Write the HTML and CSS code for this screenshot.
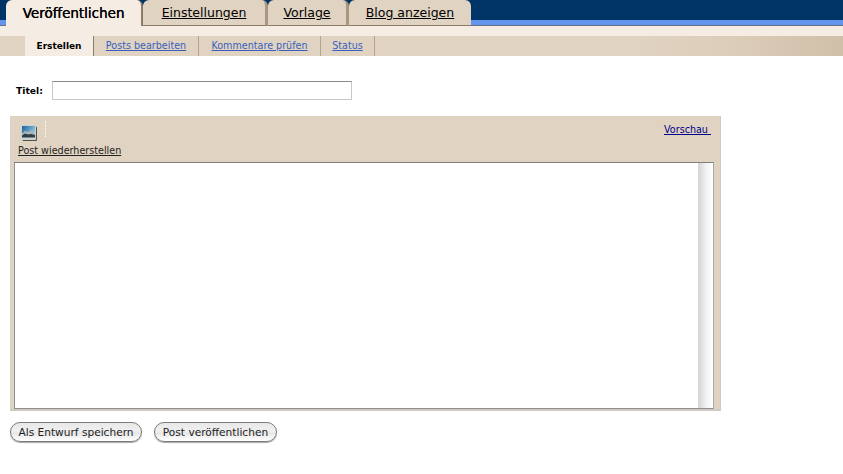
FILE: index.html
```html
<!DOCTYPE html>
<html lang="de">
<head>
<meta charset="utf-8">
<title>Erstellen</title>
<link rel="stylesheet" href="styles.css">
</head>
<body>
<nav class="tabs">
  <a class="tab tab-active" href="#">Veröffentlichen</a>
  <a class="tab tab-settings" href="#">Einstellungen</a>
  <a class="tab tab-template" href="#">Vorlage</a>
  <a class="tab tab-last" href="#">Blog anzeigen</a>
</nav>
<div class="spacer-band"></div>
<nav class="subtabs">
  <a class="subtab subtab-active" href="#">Erstellen</a>
  <a class="subtab sub-posts" href="#">Posts bearbeiten</a>
  <a class="subtab sub-comments" href="#">Kommentare prüfen</a>
  <a class="subtab sub-status" href="#">Status</a>
</nav>
<main class="content">
  <div class="title-row">
    <label class="title-label" for="titel">Titel:</label>
    <input class="title-input" id="titel" type="text">
  </div>
  <section class="editor">
    <div class="toolbar">
      <div class="tools">
        <svg class="photo-icon" width="16" height="16" viewBox="0 0 16 16" aria-hidden="true">
          <defs>
            <linearGradient id="sky" x1="0" y1="0" x2="1" y2="0.7">
              <stop offset="0" stop-color="#1f6199"/>
              <stop offset="0.6" stop-color="#6aa8cc"/>
              <stop offset="1" stop-color="#b5d5e2"/>
            </linearGradient>
          </defs>
          <rect x="1.5" y="1.5" width="14.5" height="14.5" rx="1" fill="#55523f"/>
          <rect x="0" y="0" width="15" height="15" rx="1" fill="#c9d3d6"/>
          <rect x="1" y="1" width="13" height="13" fill="url(#sky)"/>
          <path d="M1 8.5 L4 6 L7 7 L10 5.5 L14 8 V12 H1 Z" fill="#aab6bd"/>
          <path d="M1 10.5 L4 8.5 L7 9.5 L10 9 L14 10 V13 H1 Z" fill="#2f3d45"/>
          <rect x="1" y="12.5" width="13" height="1.5" fill="#cfd6d6"/>
        </svg>
        <span class="tool-separator"></span>
      </div>
      <a class="preview-link" href="#">Vorschau&nbsp;</a>
      <a class="restore-link" href="#">Post wiederherstellen</a>
    </div>
    <div class="textarea-frame">
      <div class="textarea-body"></div>
      <div class="scrollbar"></div>
    </div>
  </section>
  <div class="actions">
    <button class="pill pill-draft" type="button">Als Entwurf speichern</button>
    <button class="pill pill-publish" type="button">Post veröffentlichen</button>
  </div>
</main>
</body>
</html>
```
FILE: styles.css
```css
* { box-sizing: border-box; }
html, body { margin: 0; padding: 0; background: #fff; }
body { width: 843px; height: 474px; overflow: hidden; font-family: "DejaVu Sans", Verdana, sans-serif; color: #000; }

.tabs {
  display: flex;
  height: 26px;
  padding-left: 6px;
  background: linear-gradient(to bottom, #003366 0, #003366 20px, #6495ed 20px, #6495ed 25px, #6b6f8a 25px, #6b6f8a 26px);
}
.tab {
  height: 26px;
  padding-top: 5px;
  font-size: 12.5px;
  line-height: 16px;
  text-align: center;
  color: #000;
  background: #e0d3c1;
  border-top-left-radius: 6px;
  border-top-right-radius: 6px;
  border-bottom: 1px solid #8c7b68;
  border-right: 3px solid #a8967f;
  text-decoration: underline;
}
.tab-active {
  width: 137px;
  background: #f5ede4;
  border-bottom: 0;
  border-right-color: #8c7b68;
  border-right-width: 2px;
  font-size: 13.5px;
  text-decoration: none;
  text-shadow: 0.3px 0 0 #000;
}
.tab-settings { width: 125px; }
.tab-template { width: 81px; }
.tab-last { width: 122px; border-right: 0; }

.spacer-band { height: 10px; background: #f5ede4; }

.subtabs {
  display: flex;
  height: 20px;
  padding-left: 25px;
  background: linear-gradient(to right, #e0d3c1 0, #e0d3c1 640px, #dccdb9 730px, #d0bfa9 843px);
}
.subtab {
  font-size: 9.6px;
  line-height: 20px;
  text-align: center;
  color: #3a5fbf;
  border-right: 1px solid #b5a48f;
}
.subtab-active {
  width: 69px;
  background: #f5ede4;
  color: #000;
  text-decoration: none;
  font-size: 9px;
  font-weight: bold;
  border-right-color: #8c7b68;
}
.sub-posts { width: 105px; }
.sub-comments { width: 122px; }
.sub-status { width: 54px; }

.content { padding: 25px 0 0 10px; }

.title-row { display: flex; align-items: center; height: 19px; }
.title-label { width: 42px; padding-left: 6px; font-size: 9.2px; font-weight: bold; }
.title-input {
  width: 300px;
  height: 19px;
  padding: 0;
  background: #fff;
  border: 1px solid #c8c8c8;
  border-top-color: #8a8a8a;
  outline: 0;
}

.editor {
  width: 711px;
  height: 295px;
  margin-top: 16px;
  padding: 0 6px 0 3px;
  background: #e0d3c1;
  border-right: 1px solid #cfcac3;
  border-bottom: 2px solid #cfcac3;
  border-left: 1px solid #d8d2c8;
}
.toolbar {
  position: relative;
  height: 46px;
}
.tools { display: flex; align-items: flex-start; padding: 5px 0 0 7px; }
.photo-icon { display: block; margin-top: 4px; }
.tool-separator {
  display: block;
  width: 1px;
  height: 16px;
  margin-left: 8px;
  border-left: 1px dotted #fff;
}
.preview-link {
  position: absolute;
  top: 7px;
  right: 3px;
  font-size: 9.6px;
  line-height: 13px;
  color: #00008b;
}
.restore-link {
  position: absolute;
  top: 28px;
  left: 4px;
  font-size: 9.6px;
  line-height: 13px;
  color: #222;
}
.textarea-frame {
  display: flex;
  width: 700px;
  height: 247px;
  background: #fff;
  border: 1px solid #8f8f8f;
  border-top-color: #7f7f7f;
  border-right-color: #a8a8a8;
}
.textarea-body { flex: 1; }
.scrollbar {
  width: 15px;
  background: linear-gradient(to right, #d4d4d4 0, #f2f2f2 55%, #fff 100%);
}

.actions { display: flex; gap: 12px; margin-top: 11px; }
.pill {
  height: 20px;
  padding: 0;
  font-family: "DejaVu Sans", Verdana, sans-serif;
  font-size: 10.6px;
  line-height: 17px;
  color: #222;
  background: linear-gradient(to bottom, #e8e8e8 0, #f0f0f0 45%, #e6e6e6 55%, #ffffff 100%);
  border: 1px solid #7c7c7c;
  border-radius: 10px;
  box-shadow: 0 1px 1px rgba(0,0,0,0.35);
}
.pill-draft { width: 132px; }
.pill-publish { width: 123px; }
```
